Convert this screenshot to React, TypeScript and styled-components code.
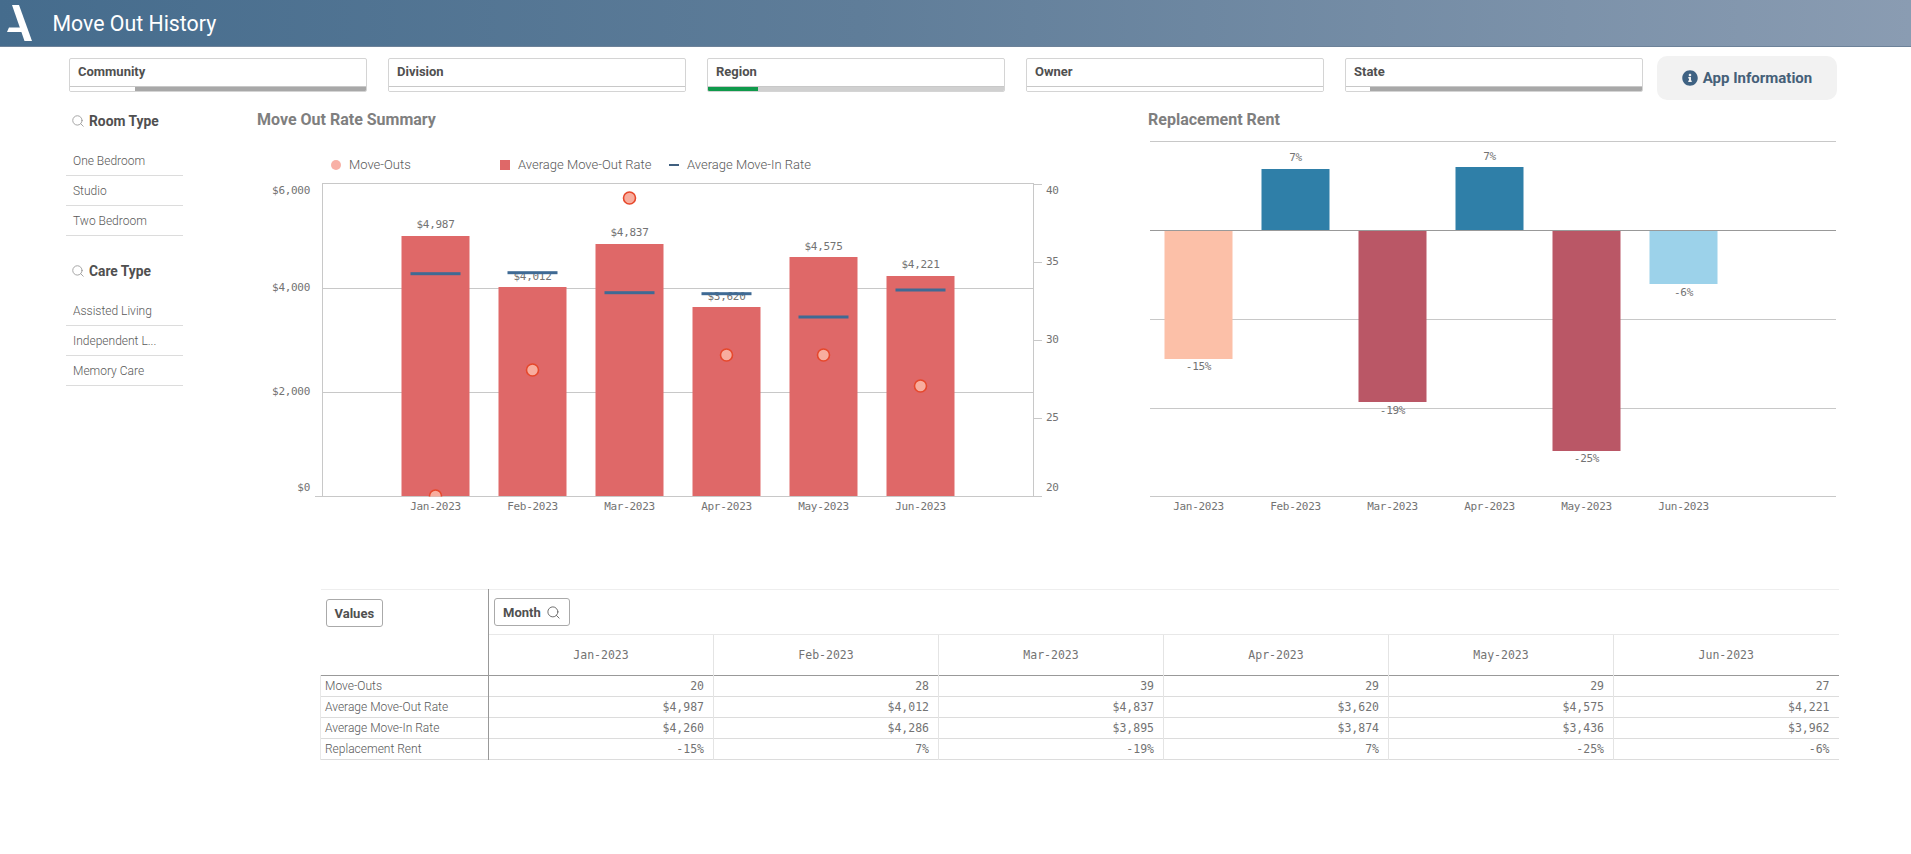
import React from 'react';
import styled, { createGlobalStyle } from 'styled-components';
import { Search } from 'lucide-react';
import { FaInfoCircle } from 'react-icons/fa';

const Global = createGlobalStyle`
  html, body { margin: 0; padding: 0; background: #fff; overflow: hidden; }
  body { font-family: Roboto, "Liberation Sans", sans-serif; color: #595959; }
  * { box-sizing: border-box; }
`;

const Page = styled.div`
  width: 1911px;
  height: 854px;
  overflow: hidden;
`;
const Header = styled.header`
  height: 47px;
  display: flex;
  align-items: center;
  background: linear-gradient(90deg, #456c8d 0%, #5f7d99 45%, #8a9cb2 100%);
  border-bottom: 1px solid #6d8299;
`;
const Logo = styled.svg`
  width: 52.5px;
  height: 47px;
  flex: none;
`;
const Title = styled.h1`
  margin: 0;
  font-size: 21.3px;
  font-weight: 400;
  color: #fff;
`;
const FilterRow = styled.div`
  display: flex;
  gap: 21px;
  height: 53px;
  padding: 9px 0 0 69px;
`;
const Filter = styled.div`
  width: 298px;
  height: 34px;
  margin-top: 2px;
  display: flex;
  flex-direction: column;
  border: 1px solid #d4d4d4;
  border-radius: 2px;
  overflow: hidden;
`;
const FilterLabel = styled.div`
  height: 28px;
  padding: 0 8px;
  line-height: 26px;
  font-size: 13px;
  font-weight: 700;
  color: #505050;
  border-bottom: 1px solid #c8c8c8;
`;
const StateBar = styled.div<{ $from: string; $to: string; $split: number }>`
  flex: 1;
  background: linear-gradient(
    90deg,
    ${p => p.$from} ${p => p.$split}%,
    ${p => p.$to} ${p => p.$split}%
  );
`;
const AppButton = styled.button`
  width: 180px;
  height: 44px;
  margin-left: -7px;
  display: flex;
  align-items: center;
  justify-content: center;
  gap: 5px;
  border: 0;
  border-radius: 10px;
  background: #f2f2f2;
  color: #456078;
  font: 700 15px Roboto, sans-serif;
`;
const Main = styled.div`
  display: flex;
  height: 420px;
`;
const Sidebar = styled.aside`
  width: 117px;
  margin-left: 66px;
  flex: none;
`;
const ListBox = styled.section`
  margin-bottom: 14px;
`;
const ListTitle = styled.div`
  height: 41px;
  margin-bottom: 5px;
  display: flex;
  align-items: center;
  gap: 4px;
  padding: 1px 0 0 5px;
  font-size: 13.8px;
  font-weight: 700;
  color: #505050;
  svg { color: #999; }
`;
const ListRow = styled.div`
  height: 30px;
  line-height: 30px;
  padding-left: 7px;
  font-size: 12px;
  font-weight: 300;
  color: #595959;
  border-bottom: 1px solid #dcdcdc;
`;
const ChartPanel = styled.section<{ $left: number; $width: number }>`
  margin-left: ${p => p.$left}px;
  width: ${p => p.$width}px;
  flex: none;
`;
const PanelTitle = styled.h2`
  height: 40px;
  margin: 0;
  line-height: 39px;
  font-size: 16px;
  font-weight: 700;
  color: #7f7f7f;
`;
const Legend = styled.div`
  display: flex;
  align-items: center;
  height: 21px;
  margin-top: 14px;
  padding-left: 74px;
  font-size: 13px;
  font-weight: 300;
  color: #595959;
`;
const LegendItem = styled.div<{ $width: number }>`
  width: ${p => p.$width}px;
  display: flex;
  align-items: center;
  gap: 8px;
`;
const Dot = styled.span`
  width: 10px;
  height: 10px;
  border-radius: 50%;
  background: #f8b0a6;
`;
const Square = styled.span`
  width: 10px;
  height: 10px;
  background: #df6868;
`;
const Dash = styled.span`
  width: 10px;
  height: 2px;
  background: #3f5f7f;
`;
const ChartSvg = styled.svg`
  display: block;
  text { font-family: "DejaVu Sans Mono", monospace; font-size: 11px; fill: #737373; letter-spacing: -0.3px; }
`;
const TableWrap = styled.div`
  margin: 69px 0 0 320px;
  width: 1518px;
`;
const Table = styled.table`
  width: 1518px;
  table-layout: fixed;
  border-collapse: collapse;
  font-size: 12px;
  font-weight: 300;
  color: #595959;
`;
const TopRow = styled.tr`
  height: 45px;
  border-top: 1px solid #eee;
`;
const HeadRow = styled.tr`
  height: 41px;
  border-bottom: 1px solid #999;
`;
const BodyRow = styled.tr`
  height: 21px;
  border-bottom: 1px solid #dcdcdc;
`;
const Corner = styled.th`
  width: 168px;
  padding: 9px 0 0 5px;
  vertical-align: top;
  text-align: left;
  border-right: 1px solid #999;
`;
const MonthCell = styled.th`
  padding: 0 0 0 5px;
  text-align: left;
  vertical-align: middle;
  border-bottom: 1px solid #e8e8e8;
`;
const Chip = styled.span`
  display: inline-flex;
  align-items: center;
  gap: 5px;
  height: 28px;
  padding: 0 8px;
  border: 1px solid #aaa;
  border-radius: 3px;
  font-size: 13px;
  font-weight: 700;
  color: #505050;
  svg { color: #666; }
`;
const ColHead = styled.th`
  font-family: "DejaVu Sans Mono", monospace;
  font-size: 11.5px;
  font-weight: 400;
  color: #737373;
  text-align: center;
  border-right: 1px solid #e4e4e4;
  &:last-child { border-right: 0; }
`;
const RowHead = styled.td`
  padding: 0 0 0 4px;
  white-space: nowrap;
  border-left: 1px solid #e8e8e8;
  border-right: 1px solid #999;
`;
const Value = styled.td`
  padding: 0 9px 0 0;
  font-family: "DejaVu Sans Mono", monospace;
  font-size: 11.5px;
  color: #737373;
  text-align: right;
  border-right: 1px solid #e4e4e4;
  &:last-child { border-right: 0; }
`;

const months = ['Jan-2023', 'Feb-2023', 'Mar-2023', 'Apr-2023', 'May-2023', 'Jun-2023'];
const rate = [
  { x: 401.5, top: 236, label: '$4,987', ly: 225, dash: 273.7, dot: 496 },
  { x: 498.5, top: 287, label: '$4,012', ly: 277, dash: 272.7, dot: 370 },
  { x: 595.5, top: 244, label: '$4,837', ly: 233, dash: 292.7, dot: 198 },
  { x: 692.5, top: 307, label: '$3,620', ly: 297, dash: 293.7, dot: 355 },
  { x: 789.5, top: 257, label: '$4,575', ly: 247, dash: 317, dot: 355 },
  { x: 886.5, top: 276, label: '$4,221', ly: 265, dash: 290, dot: 386 },
];
const rent = [
  { x: 1164.5, y: 230, h: 129, color: '#fcc0a8', label: '-15%', ly: 367 },
  { x: 1261.5, y: 169, h: 61, color: '#2f7fa8', label: '7%', ly: 158 },
  { x: 1358.5, y: 230, h: 172, color: '#ba5766', label: '-19%', ly: 411 },
  { x: 1455.5, y: 167, h: 63, color: '#2f7fa8', label: '7%', ly: 157 },
  { x: 1552.5, y: 230, h: 221, color: '#ba5766', label: '-25%', ly: 459 },
  { x: 1649.5, y: 230, h: 54, color: '#9cd2ea', label: '-6%', ly: 293 },
];
const rows = [
  ['Move-Outs', '20', '28', '39', '29', '29', '27'],
  ['Average Move-Out Rate', '$4,987', '$4,012', '$4,837', '$3,620', '$4,575', '$4,221'],
  ['Average Move-In Rate', '$4,260', '$4,286', '$3,895', '$3,874', '$3,436', '$3,962'],
  ['Replacement Rent', '-15%', '7%', '-19%', '7%', '-25%', '-6%'],
];
const filters = [
  { name: 'Community', from: '#fff', to: '#a8a8a8', split: 22 },
  { name: 'Division', from: '#fff', to: '#fff', split: 0 },
  { name: 'Region', from: '#0f9a4b', to: '#d0d0d0', split: 17 },
  { name: 'Owner', from: '#fff', to: '#fff', split: 0 },
  { name: 'State', from: '#fff', to: '#a8a8a8', split: 8 },
];

const RateChart = () => (
  <ChartSvg width={880} height={345} viewBox="257 175 880 345">
    <g stroke="#c8c8c8" strokeWidth="1" shapeRendering="crispEdges">
      <line x1="322.5" x2="1033.5" y1="183.5" y2="183.5" />
      <line x1="322.5" x2="1033.5" y1="288.5" y2="288.5" />
      <line x1="322.5" x2="1033.5" y1="392.5" y2="392.5" />
      <line x1="315" x2="1042" y1="496.5" y2="496.5" />
      <line x1="322.5" x2="322.5" y1="183" y2="497" />
      <line x1="1033.5" x2="1033.5" y1="183" y2="497" />
      {[184, 262, 340, 418].map(y => <line key={y} x1="1034" x2="1042" y1={y + 0.5} y2={y + 0.5} />)}
    </g>
    {[['$6,000', 191], ['$4,000', 288], ['$2,000', 392], ['$0', 488]].map(([t, y]) => (
      <text key={t} x="310" y={Number(y) + 3} textAnchor="end">{t}</text>
    ))}
    {[['40', 191], ['35', 262], ['30', 340], ['25', 418], ['20', 488]].map(([t, y]) => (
      <text key={t} x="1046" y={Number(y) + 3}>{t}</text>
    ))}
    {rate.map((d, i) => (
      <g key={d.label}>
        <rect x={d.x} y={d.top} width="68" height={496 - d.top} fill="#df6868" />
        <text x={d.x + 34} y={d.ly + 3} textAnchor="middle">{d.label}</text>
        <rect x={d.x + 9} y={d.dash - 1.5} width="50" height="3" fill="#3f6a94" />
        <svg x="257" y="175" width="880" height="321.5" viewBox="257 175 880 321.5" overflow="hidden">
          <circle cx={d.x + 34} cy={d.dot} r="6" fill="#f8ad9e" stroke="#e6482c" strokeWidth="1.6" />
        </svg>
        <text x={d.x + 34} y={510} textAnchor="middle">{months[i]}</text>
      </g>
    ))}
  </ChartSvg>
);

const RentChart = () => (
  <ChartSvg width={700} height={380} viewBox="1148 140 700 380">
    <g stroke="#c8c8c8" strokeWidth="1" shapeRendering="crispEdges">
      <line x1="1150" x2="1836" y1="141.5" y2="141.5" />
      <line x1="1150" x2="1836" y1="319.5" y2="319.5" />
      <line x1="1150" x2="1836" y1="408.5" y2="408.5" />
      <line x1="1150" x2="1836" y1="496.5" y2="496.5" />
    </g>
    {rent.map((d, i) => (
      <g key={i}>
        <rect x={d.x} y={d.y} width="68" height={d.h} fill={d.color} />
        <text x={d.x + 34} y={d.ly + 3} textAnchor="middle">{d.label}</text>
        <text x={d.x + 34} y={510} textAnchor="middle">{months[i]}</text>
      </g>
    ))}
    <line x1="1150" x2="1836" y1="230.5" y2="230.5" stroke="#999" shapeRendering="crispEdges" />
  </ChartSvg>
);

const List = ({ title, items }: { title: string; items: string[] }) => (
  <ListBox>
    <ListTitle><Search size={14} strokeWidth={1.5} />{title}</ListTitle>
    {items.map(t => <ListRow key={t}>{t}</ListRow>)}
  </ListBox>
);

export default function App() {
  return (
    <Page>
      <Global />
      <Header>
        <Logo viewBox="0 0 52.5 47">
          <path d="M12 5h7L32 41h-7.5z" fill="#fff" />
          <path d="M9 27.5h12l1.6 4.5H7z" fill="#fff" />
        </Logo>
        <Title>Move Out History</Title>
      </Header>
      <FilterRow>
        {filters.map(f => (
          <Filter key={f.name}>
            <FilterLabel>{f.name}</FilterLabel>
            <StateBar $from={f.from} $to={f.to} $split={f.split} />
          </Filter>
        ))}
        <AppButton><FaInfoCircle size={16} color="#3f6283" />App Information</AppButton>
      </FilterRow>
      <Main>
        <Sidebar>
          <List title="Room Type" items={['One Bedroom', 'Studio', 'Two Bedroom']} />
          <List title="Care Type" items={['Assisted Living', 'Independent L...', 'Memory Care']} />
        </Sidebar>
        <ChartPanel $left={74} $width={891}>
          <PanelTitle>Move Out Rate Summary</PanelTitle>
          <Legend>
            <LegendItem $width={169}><Dot />Move-Outs</LegendItem>
            <LegendItem $width={169}><Square />Average Move-Out Rate</LegendItem>
            <LegendItem $width={150}><Dash />Average Move-In Rate</LegendItem>
          </Legend>
          <RateChart />
        </ChartPanel>
        <ChartPanel $left={0} $width={700}>
          <PanelTitle>Replacement Rent</PanelTitle>
          <RentChart />
        </ChartPanel>
      </Main>
      <TableWrap>
        <Table>
          <colgroup>
            <col width="168" />
            {months.map(m => <col key={m} width="225" />)}
          </colgroup>
          <tbody>
            <TopRow>
              <Corner rowSpan={2}><Chip>Values</Chip></Corner>
              <MonthCell colSpan={6}><Chip>Month <Search size={15} strokeWidth={1.5} /></Chip></MonthCell>
            </TopRow>
            <HeadRow>
              {months.map(m => <ColHead key={m}>{m}</ColHead>)}
            </HeadRow>
            {rows.map(r => (
              <BodyRow key={r[0]}>
                <RowHead>{r[0]}</RowHead>
                {r.slice(1).map((v, i) => <Value key={i}>{v}</Value>)}
              </BodyRow>
            ))}
          </tbody>
        </Table>
      </TableWrap>
    </Page>
  );
}
